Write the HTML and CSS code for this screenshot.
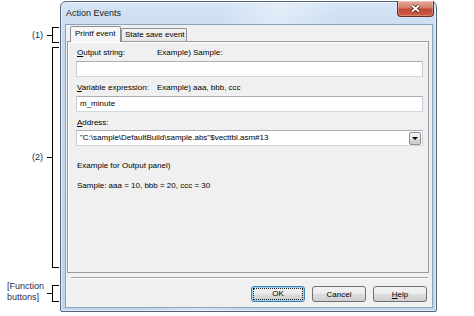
FILE: index.html
```html
<!DOCTYPE html>
<html>
<head>
  <meta charset="utf-8">
  <link rel="stylesheet" href="styles.css">
</head>
<body>
  <div class="figure">
    <div class="notes">
      <div class="note note-tabs">
        <span class="note-text">(1)</span><span class="tick"></span><span class="bracket"></span>
      </div>
      <div class="note note-panel">
        <span class="note-text">(2)</span><span class="tick"></span><span class="bracket"></span>
      </div>
      <div class="note note-buttons">
        <span class="note-text note-multi">[Function<br>buttons]</span><span class="tick"></span><span class="bracket"></span>
      </div>
    </div>

    <div class="window">
      <div class="titlebar">
        <span class="title">Action Events</span>
        <span class="close">
          <svg width="11" height="9" viewBox="0 0 11 9">
            <path d="M2 1.5 L9 7.5 M9 1.5 L2 7.5" stroke="#4a1a10" stroke-width="3.4" fill="none"/>
            <path d="M2 1.5 L9 7.5 M9 1.5 L2 7.5" stroke="#fff" stroke-width="1.8" fill="none"/>
          </svg>
        </span>
      </div>

      <div class="client">
        <div class="tabs">
          <div class="tab tab-active">Printf event</div>
          <div class="tab">State save event</div>
        </div>

        <div class="panel">
          <div class="label-row">
            <span class="label"><u>O</u>utput string:</span>
            <span>Example) Sample:</span>
          </div>
          <div class="field"></div>

          <div class="label-row spaced">
            <span class="label"><u>V</u>ariable expression:</span>
            <span>Example) aaa, bbb, ccc</span>
          </div>
          <div class="field">m_minute</div>

          <div class="label-row spaced">
            <span class="label"><u>A</u>ddress:</span>
          </div>
          <div class="field combo">
            <span class="combo-value">"C:\sample\DefaultBuild\sample.abs"$vecttbl.asm#13</span>
            <span class="drop"><span class="arrow"></span></span>
          </div>

          <p class="example">Example for Output panel)</p>
          <p class="sample">Sample: aaa = 10, bbb = 20, ccc = 30</p>
        </div>

        <div class="separator"></div>

        <div class="buttons">
          <button class="button button-default"><span class="focus">OK</span></button>
          <button class="button">Cancel</button>
          <button class="button"><span><u>H</u>elp</span></button>
        </div>
      </div>
    </div>
  </div>
</body>
</html>
```

FILE: styles.css
```css
* {
  margin: 0;
  padding: 0;
  box-sizing: border-box;
}

body {
  background: #ffffff;
  font-family: 'Liberation Sans', Arial, sans-serif;
  font-size: 8px;
  color: #000000;
}

.figure {
  display: flex;
  align-items: flex-start;
}

/* Callout brackets on the left */
.notes {
  width: 60px;
  display: flex;
  flex-direction: column;
}

.note {
  display: flex;
  align-items: center;
  justify-content: flex-end;
  padding-right: 1px;
  color: #1d2b58;
  font-size: 9px;
}

.note-tabs {
  margin-top: 27px;
  height: 16px;
}

.note-panel {
  margin-top: 4px;
  height: 221px;
}

.note-buttons {
  margin-top: 17px;
  height: 17px;
}

.note-text {
  margin-right: 4px;
  line-height: 11px;
}

.note-multi {
  margin-right: 3px;
  margin-bottom: 3px;
}

.tick {
  width: 5px;
  height: 1px;
  background: #000000;
}

.bracket {
  align-self: stretch;
  width: 7px;
  border: 1px solid #000000;
  border-right: none;
}

/* Dialog window */
.window {
  width: 377px;
  height: 311px;
  margin-top: 1px;
  border: 1px solid #56647a;
  border-radius: 6px 6px 2px 2px;
  background:
    linear-gradient(105deg, rgba(255, 255, 255, 0) 35%, rgba(255, 255, 255, 0.35) 48%, rgba(255, 255, 255, 0) 62%),
    linear-gradient(#d6e5f5 0%, #c6d9ef 12%, #bfd4eb 100%);
  box-shadow: inset 0 0 0 1px rgba(255, 255, 255, 0.5);
  display: flex;
  flex-direction: column;
}

.titlebar {
  height: 22px;
  flex-shrink: 0;
  display: flex;
  align-items: flex-start;
}

.title {
  margin: 5px 0 0 5px;
  font-size: 9px;
  line-height: 12px;
  color: #1a1a1a;
}

.close {
  margin: -1px 2px 0 auto;
  width: 37px;
  height: 16px;
  border: 1px solid #6a2e24;
  border-top: none;
  border-radius: 0 0 4px 4px;
  background: linear-gradient(#e6ad9f 0%, #d57c69 45%, #c04a33 55%, #cc5d45 100%);
  box-shadow: inset 0 0 0 1px rgba(255, 255, 255, 0.25);
  display: flex;
  align-items: center;
  justify-content: center;
}

.client {
  flex: 1;
  margin: 0 3px 3px 4px;
  border: 1px solid #8fa3ba;
  background: #f0f0f0;
  padding: 1px 3px 0 1px;
  display: flex;
  flex-direction: column;
}

/* Tabs */
.tabs {
  display: flex;
  align-items: flex-end;
  height: 16px;
  margin-bottom: -1px;
  padding-left: 3px;
}

.tab {
  height: 14px;
  width: 66px;
  padding-left: 3px;
  border: 1px solid #8c8f98;
  border-bottom: none;
  border-radius: 2px 2px 0 0;
  background: linear-gradient(#f4f4f4, #e4e4e4);
  line-height: 12px;
  white-space: nowrap;
}

.tab-active {
  position: relative;
  height: 16px;
  width: 51px;
  padding-left: 4px;
  background: #f7f7f7;
  line-height: 14px;
}

.panel {
  height: 232px;
  border: 1px solid #979ba3;
  background: #f0f0f0;
  box-shadow: inset 1px 1px 0 #ffffff;
  padding: 5px 5px 0 8px;
}

.label-row {
  display: flex;
  line-height: 11px;
  padding-left: 1px;
}

.label-row.spaced {
  margin-top: 5px;
}

.label {
  width: 80px;
}

.field {
  height: 16px;
  margin-top: 3px;
  border: 1px solid;
  border-color: #a9acb3 #c9ccd2 #d3d6dc #c9ccd2;
  background: #ffffff;
  padding-left: 3px;
  line-height: 14px;
}

.combo {
  margin-top: 2px;
  display: flex;
  align-items: center;
  padding-right: 1px;
}

.combo-value {
  flex: 1;
}

.drop {
  width: 12px;
  height: 13px;
  border: 1px solid #8e8f8f;
  border-radius: 2px;
  background: linear-gradient(#f4f4f4 0%, #e8e8e8 50%, #d9d9d9 51%, #cdcdcd 100%);
  display: flex;
  align-items: center;
  justify-content: center;
}

.arrow {
  width: 0;
  height: 0;
  border-left: 3px solid transparent;
  border-right: 3px solid transparent;
  border-top: 3px solid #000000;
}

.example {
  margin-top: 14px;
  padding-left: 1px;
  line-height: 11px;
}

.sample {
  margin-top: 9px;
  padding-left: 1px;
  line-height: 11px;
}

/* Function buttons */
.separator {
  margin: 4px 1px 0 4px;
  border-top: 1px solid #a0a0a0;
  border-bottom: 1px solid #ffffff;
}

.buttons {
  display: flex;
  justify-content: flex-end;
  gap: 7px;
  margin-top: 7px;
  padding-right: 2px;
}

.button {
  width: 54px;
  height: 16px;
  border: 1px solid #707070;
  border-radius: 3px;
  background: linear-gradient(#f2f2f2 0%, #ebebeb 50%, #dddddd 51%, #cfcfcf 100%);
  font: inherit;
  color: #000000;
  display: flex;
  align-items: center;
  justify-content: center;
}

.button-default {
  border-color: #3c7fb1;
  box-shadow: inset 0 0 0 1px #9fd3f3;
  padding: 1px;
  align-items: stretch;
}

.focus {
  flex: 1;
  border: 1px dotted #1a1a1a;
  line-height: 10px;
  text-align: center;
}
```
